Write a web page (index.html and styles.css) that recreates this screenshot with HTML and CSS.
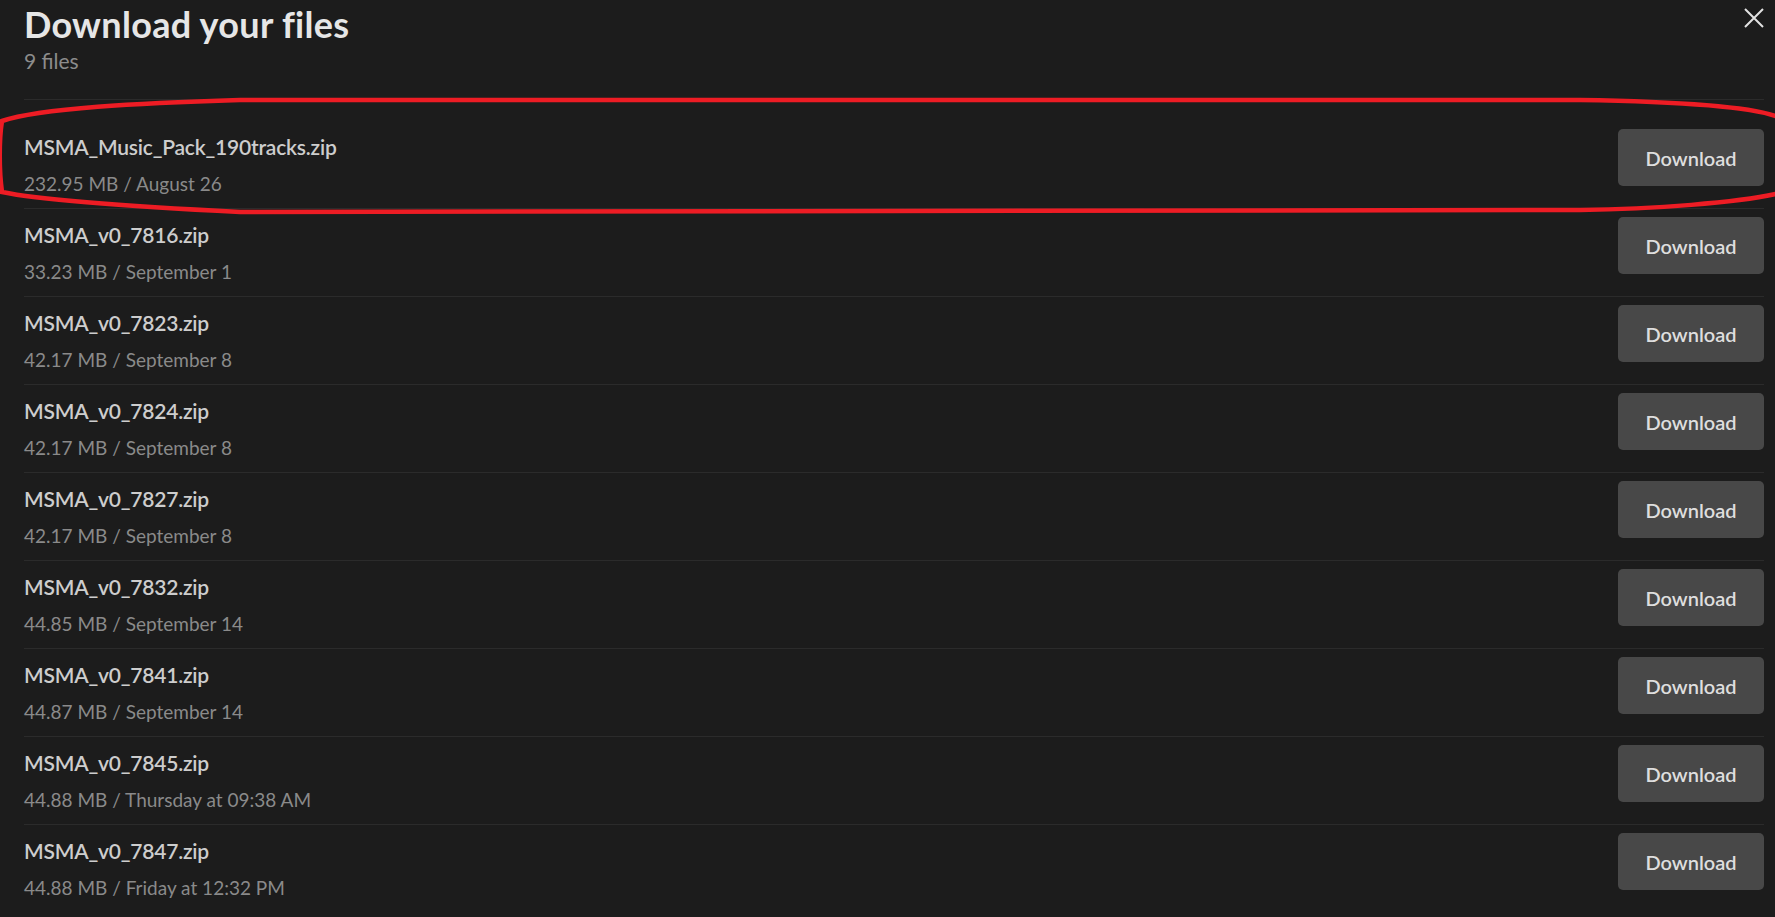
FILE: index.html
```html
<!DOCTYPE html>
<html lang="en">
<head>
<meta charset="UTF-8">
<meta name="viewport" content="width=device-width, initial-scale=1.0">
<title>Download your files</title>
<link rel="stylesheet" href="styles.css">
</head>
<body>
<div class="download-panel">
  <div class="panel-header">
    <div>
      <h1>Download your files</h1>
      <div class="file-count">9 files</div>
    </div>
    <button class="close-btn" aria-label="Close">
      <svg width="20" height="20" viewBox="0 0 20 20">
        <path d="M1 1 L19 19 M19 1 L1 19" stroke="currentColor" stroke-width="2" fill="none"/>
      </svg>
    </button>
  </div>

  <div class="file-list">
    <div class="file-row">
      <div class="file-info">
        <div class="file-name">MSMA_Music_Pack_190tracks.zip</div>
        <div class="file-meta">232.95 MB / August 26</div>
      </div>
      <button class="download-btn">Download</button>
    </div>
    <div class="file-row">
      <div class="file-info">
        <div class="file-name">MSMA_v0_7816.zip</div>
        <div class="file-meta">33.23 MB / September 1</div>
      </div>
      <button class="download-btn">Download</button>
    </div>
    <div class="file-row">
      <div class="file-info">
        <div class="file-name">MSMA_v0_7823.zip</div>
        <div class="file-meta">42.17 MB / September 8</div>
      </div>
      <button class="download-btn">Download</button>
    </div>
    <div class="file-row">
      <div class="file-info">
        <div class="file-name">MSMA_v0_7824.zip</div>
        <div class="file-meta">42.17 MB / September 8</div>
      </div>
      <button class="download-btn">Download</button>
    </div>
    <div class="file-row">
      <div class="file-info">
        <div class="file-name">MSMA_v0_7827.zip</div>
        <div class="file-meta">42.17 MB / September 8</div>
      </div>
      <button class="download-btn">Download</button>
    </div>
    <div class="file-row">
      <div class="file-info">
        <div class="file-name">MSMA_v0_7832.zip</div>
        <div class="file-meta">44.85 MB / September 14</div>
      </div>
      <button class="download-btn">Download</button>
    </div>
    <div class="file-row">
      <div class="file-info">
        <div class="file-name">MSMA_v0_7841.zip</div>
        <div class="file-meta">44.87 MB / September 14</div>
      </div>
      <button class="download-btn">Download</button>
    </div>
    <div class="file-row">
      <div class="file-info">
        <div class="file-name">MSMA_v0_7845.zip</div>
        <div class="file-meta">44.88 MB / Thursday at 09:38 AM</div>
      </div>
      <button class="download-btn">Download</button>
    </div>
    <div class="file-row">
      <div class="file-info">
        <div class="file-name">MSMA_v0_7847.zip</div>
        <div class="file-meta">44.88 MB / Friday at 12:32 PM</div>
      </div>
      <button class="download-btn">Download</button>
    </div>
  </div>

  <!-- red marker drawn round the first file -->
  <svg class="highlight" width="1775" height="917" viewBox="0 0 1775 917">
    <path d="M240 100 L1580 100 C1700 102 1760 108 1780 118 C1800 130 1800 180 1780 193 C1740 203 1650 209 1580 210 L240 212 C140 207 40 200 2 192 C-1 170 -1 140 2 121 C40 108 140 103 240 100 Z"
          fill="none" stroke="#ed1c24" stroke-width="4.5"/>
  </svg>
</div>
</body>
</html>
```

FILE: styles.css
```css
body {
  margin: 0;
  background: #1c1c1c;
  font-family: Lato, 'Open Sans', Arial, sans-serif;
  color: #cfcfcf;
}
.download-panel {
  position: relative;
  padding: 0 11px 0 24px;
}
.panel-header {
  display: flex;
  justify-content: space-between;
  align-items: flex-start;
  padding: 3px 0 25px;
  border-bottom: 1px solid #2b2b2b;
}
.panel-header h1 {
  margin: 0;
  font-size: 36px;
  line-height: 42px;
  font-weight: 700;
  letter-spacing: 0.3px;
  color: #e6e6e6;
}
.file-count {
  margin-top: 3px;
  font-size: 21px;
  line-height: 26px;
  color: #8c8c8c;
}
.close-btn {
  margin-top: 5px;
  padding: 0;
  border: none;
  background: none;
  color: #e2e2e2;
  cursor: pointer;
}
.close-btn svg {
  display: block;
}
.file-list {
  padding-top: 21px;
}
.file-row {
  display: flex;
  justify-content: space-between;
  align-items: flex-start;
  height: 88px;
  box-sizing: border-box;
  border-bottom: 1px solid #2b2b2b;
}
.file-row:last-child {
  border-bottom: none;
}
.file-info {
  padding-top: 13px;
}
.file-name {
  font-size: 21px;
  line-height: 26px;
  font-weight: 600;
  letter-spacing: -0.2px;
  color: #cdcdcd;
}
.file-meta {
  margin-top: 12px;
  font-size: 19px;
  line-height: 24px;
  color: #8a8a8a;
}
.download-btn {
  margin-top: 8px;
  width: 146px;
  height: 57px;
  border: none;
  border-radius: 5px;
  background: #484848;
  color: #dedede;
  font-family: inherit;
  font-size: 20px;
  font-weight: 600;
  cursor: pointer;
}
.download-btn:hover {
  background: #555;
}
.highlight {
  position: absolute;
  top: 0;
  left: 0;
  pointer-events: none;
}
```
